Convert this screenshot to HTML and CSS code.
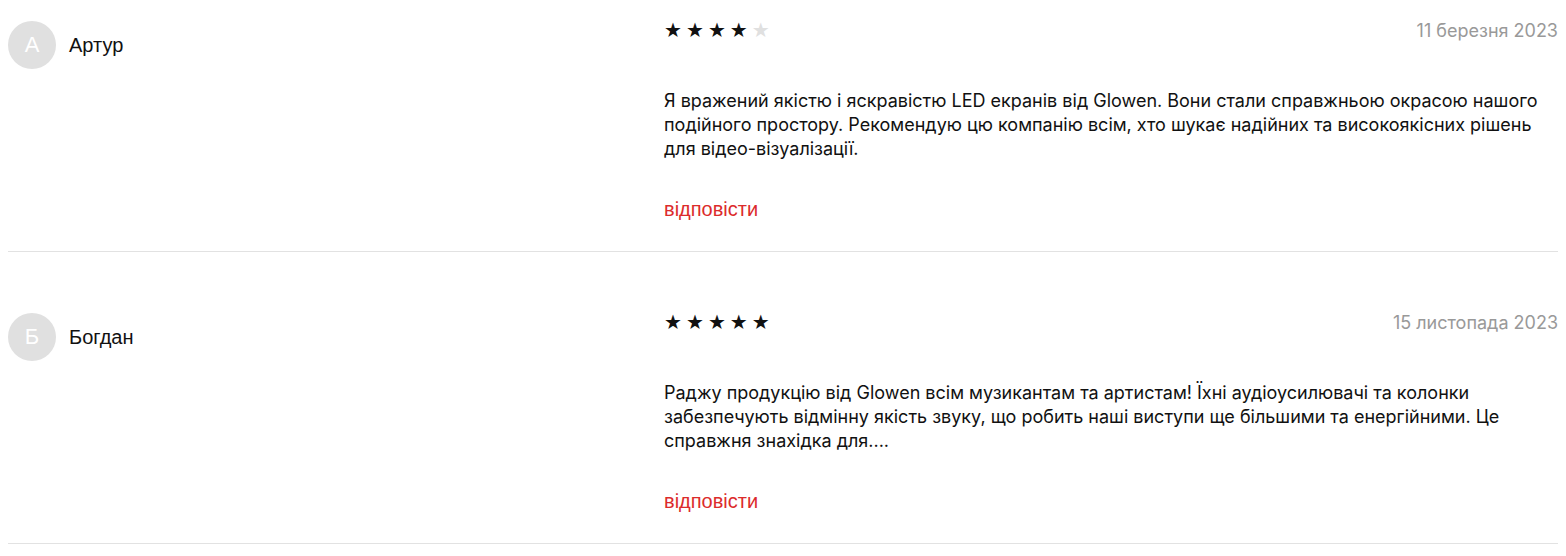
FILE: index.html
```html
<!DOCTYPE html>
<html lang="uk">
<head>
    <meta charset="UTF-8">
    <meta name="viewport" content="width=device-width, initial-scale=1.0">
    <title>Відгуки</title>
    <link rel="stylesheet" href="styles.css">
</head>
<body>
    <div class="reviews">
        <div class="review">
            <div class="review-author">
                <div class="avatar">А</div>
                <div class="author-name">Артур</div>
            </div>
            <div class="review-body">
                <div class="review-head">
                    <div class="stars">
                        <span class="star">★</span><span class="star">★</span><span class="star">★</span><span class="star">★</span><span class="star empty">★</span>
                    </div>
                    <div class="review-date">11 березня 2023</div>
                </div>
                <p class="review-text">Я вражений якістю і яскравістю LED екранів від Glowen. Вони стали справжньою окрасою нашого подійного простору. Рекомендую цю компанію всім, хто шукає надійних та високоякісних рішень для відео-візуалізації.</p>
                <a class="reply" href="#">відповісти</a>
            </div>
        </div>
        <div class="review">
            <div class="review-author">
                <div class="avatar">Б</div>
                <div class="author-name">Богдан</div>
            </div>
            <div class="review-body">
                <div class="review-head">
                    <div class="stars">
                        <span class="star">★</span><span class="star">★</span><span class="star">★</span><span class="star">★</span><span class="star">★</span>
                    </div>
                    <div class="review-date">15 листопада 2023</div>
                </div>
                <p class="review-text">Раджу продукцію від Glowen всім музикантам та артистам! Їхні аудіоусилювачі та колонки забезпечують відмінну якість звуку, що робить наші виступи ще більшими та енергійними. Це справжня знахідка для....</p>
                <a class="reply" href="#">відповісти</a>
            </div>
        </div>
    </div>
</body>
</html>
```

FILE: styles.css
```css
body {
    margin: 8px;
    background: #fff;
    color: #111;
    font-family: Inter, "Noto Sans", sans-serif;
}
.review {
    display: flex;
    padding: 13px 0 30px;
    border-bottom: 1px solid #e2e2e2;
}
.review + .review {
    margin-top: 48px;
}
.review-author {
    width: 656px;
    flex-shrink: 0;
    display: flex;
    align-items: flex-start;
    gap: 13px;
}
.avatar {
    width: 48px;
    height: 48px;
    border-radius: 50%;
    background: #e0e0e0;
    color: #fff;
    display: flex;
    justify-content: center;
    align-items: center;
    font-family: "Liberation Sans", Arial, sans-serif;
    font-size: 22px;
}
.author-name {
    line-height: 48px;
    font-family: "Liberation Sans", Arial, sans-serif;
    font-size: 20px;
    color: #111;
}
.review-body {
    flex: 1;
}
.review-head {
    display: flex;
    justify-content: space-between;
    align-items: center;
    height: 18px;
}
.stars {
    display: flex;
    gap: 4px;
    font-family: "DejaVu Sans", sans-serif;
    font-size: 20px;
    line-height: 18px;
}
.star {
    color: #111;
}
.star.empty {
    color: #e0e0e0;
}
.review-date {
    font-size: 18px;
    color: #999;
}
.review-text {
    margin: 50px 0 0;
    font-size: 18px;
    line-height: 24px;
    color: #111;
}
.reply {
    display: block;
    margin-top: 36px;
    line-height: 24px;
    font-family: "Liberation Sans", Arial, sans-serif;
    font-size: 20px;
    color: #dc2b2b;
    text-decoration: none;
}
```
